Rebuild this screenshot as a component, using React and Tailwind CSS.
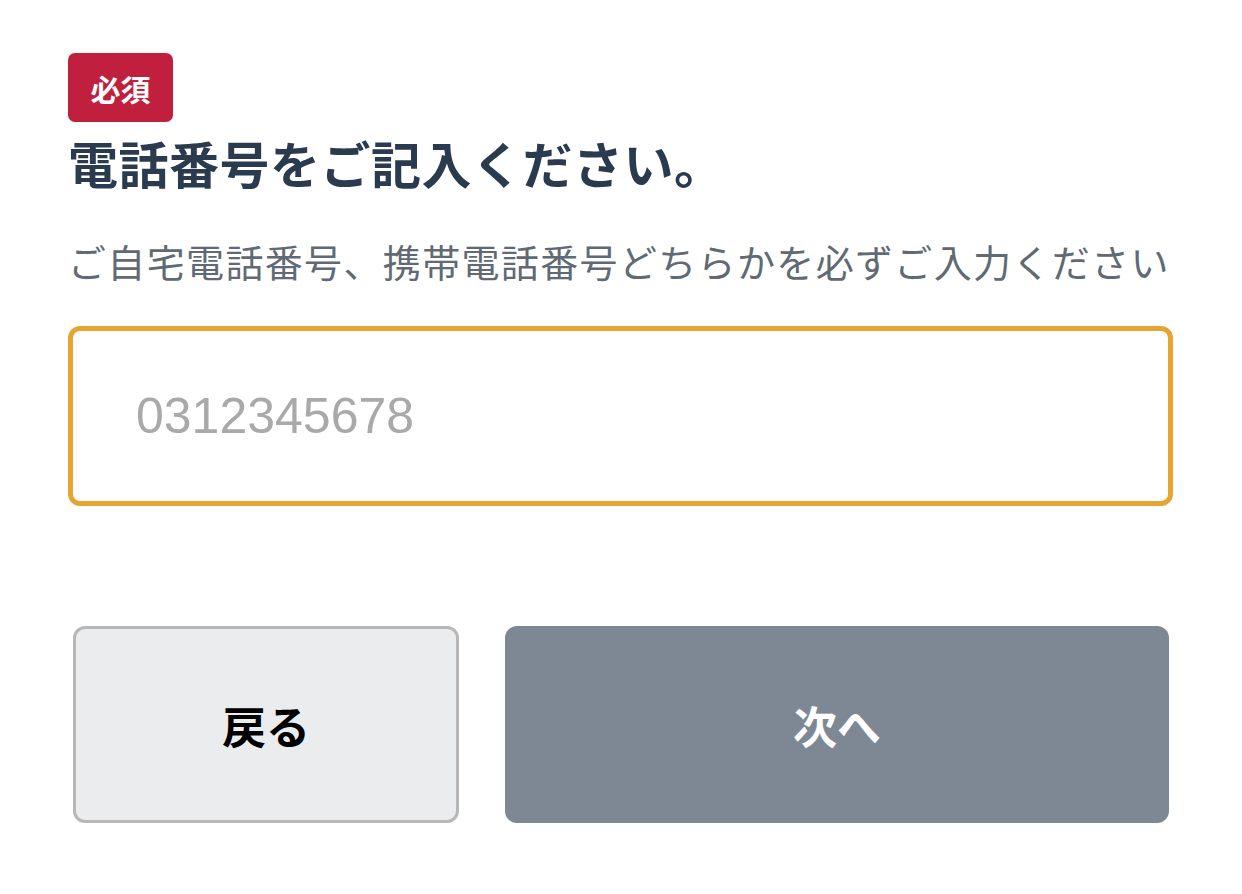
const jp = "font-['Noto_Sans_CJK_JP','Noto_Sans',sans-serif]";

const App = () => {
    return (
        <div className={`w-[1242px] h-[894px] bg-white pl-[68px] pr-[69px] pt-[53px] ${jp}`}>
            <div className="flex flex-col">
                <div className="w-[105px] h-[69px] rounded-[7px] bg-[#c0203e] flex items-center justify-center">
                    <span className="text-white text-[30px] font-bold leading-none">必須</span>
                </div>
                <div className="mt-[8px] text-[50px] font-bold text-[#2b3b4f] leading-[64px] tracking-[0.5px]">
                    電話番号をご記入ください。
                </div>
                <div className="mt-[41px] text-[38px] text-[#5f6a74] leading-[52px] tracking-[1.35px] whitespace-nowrap">
                    ご自宅電話番号、携帯電話番号どちらかを必ずご入力ください
                </div>
                <input
                    type="text"
                    placeholder="0312345678"
                    className="mt-[39px] w-[1105px] h-[180px] rounded-[12px] border-[5px] border-[#e6a531] bg-white pl-[63px] text-[50px] font-['Liberation_Sans',sans-serif] text-[#333] placeholder:text-[#a9a9a9] outline-none"
                />
                <div className="mt-[120px] ml-[5px] flex gap-[46px]">
                    <button className="w-[386px] h-[197px] rounded-[12px] border-[3px] border-[#b7b7b7] bg-[#ebecee] text-[44px] font-bold text-black">
                        戻る
                    </button>
                    <button className="w-[664px] h-[197px] rounded-[12px] bg-[#7d8894] text-[44px] font-bold text-white">
                        次へ
                    </button>
                </div>
            </div>
        </div>
    );
};

export default App;
